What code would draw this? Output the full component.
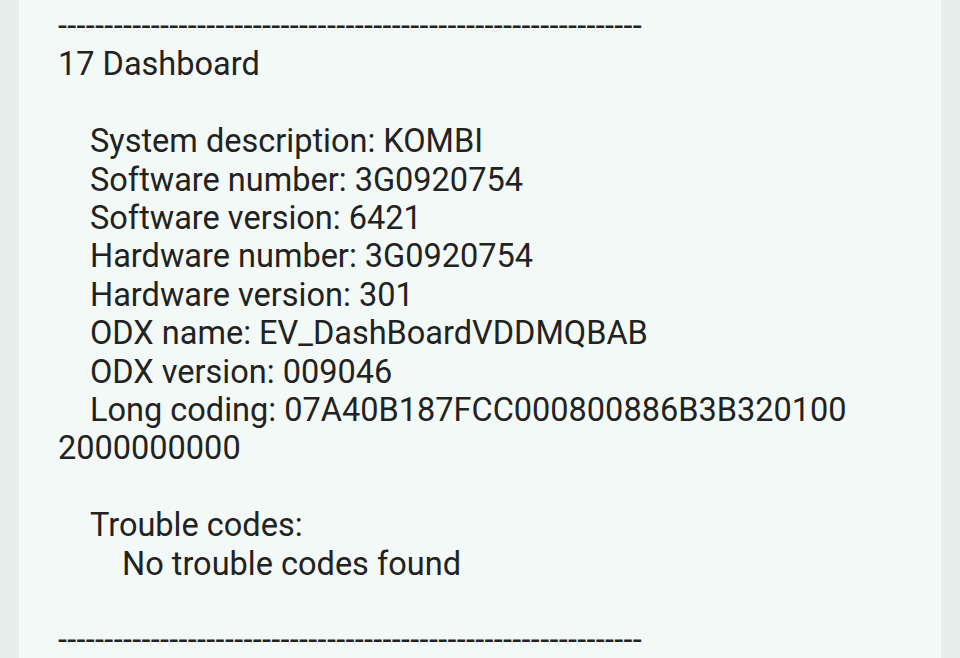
const DASHES = "---------------------------------------------------------------"

const info: [string, string][] = [
  ["System description", "KOMBI"],
  ["Software number", "3G0920754"],
  ["Software version", "6421"],
  ["Hardware number", "3G0920754"],
  ["Hardware version", "301"],
  ["ODX name", "EV_DashBoardVDDMQBAB"],
  ["ODX version", "009046"],
]

export default function App() {
  return (
    <div className="h-[658px] w-[960px] overflow-hidden bg-[#e7eeec] px-[19px]">
      <div
        className="h-full bg-[#f3f9f7] pl-[39px] pt-[7px] text-[32.5px] leading-[38.4px] text-[#222222]"
        style={{ fontFamily: "Roboto, 'Noto Sans', sans-serif" }}
      >
        <div className="tracking-[0.29px]">{DASHES}</div>
        <div>17 Dashboard</div>
        <div className="h-[38.4px]" />
        <div className="pl-[32px]">
          {info.map(([k, v]) => (
            <div key={k}>
              {k}: {v}
            </div>
          ))}
          <div>Long coding: 07A40B187FCC000800886B3B320100</div>
        </div>
        <div>2000000000</div>
        <div className="h-[38.4px]" />
        <div className="pl-[32px]">
          <div>Trouble codes:</div>
          <div className="pl-[32px]">No trouble codes found</div>
        </div>
        <div className="h-[38.4px]" />
        <div className="tracking-[0.29px]">{DASHES}</div>
      </div>
    </div>
  )
}
